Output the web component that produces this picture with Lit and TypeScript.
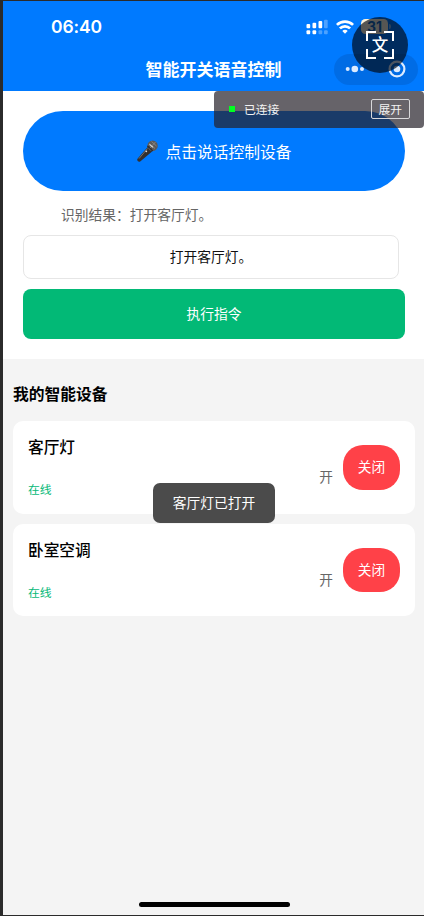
import { LitElement, html, css, svg } from "lit";
import { customElement, property } from "lit/decorators.js";

@customElement("device-card")
class DeviceCard extends LitElement {
  @property() name = "";
  @property() status = "在线";
  @property() power = "开";

  static styles = css`
    :host {
      display: flex;
      box-sizing: border-box;
      height: 92.5px;
      padding: 0 14.5px 0 15px;
      border-radius: 10px;
      background: #fff;
    }
    .info {
      flex: 1;
      display: flex;
      flex-direction: column;
      justify-content: space-between;
      padding: 14px 0 15.5px;
    }
    .name {
      font-size: 15.7px;
      line-height: 24px;
      font-weight: 500;
      color: #000;
    }
    .status {
      font-size: 11.8px;
      line-height: 18px;
      color: #07b978;
    }
    .actions {
      display: flex;
      align-items: center;
      gap: 10px;
    }
    .power {
      font-size: 13.7px;
      line-height: 20px;
      padding-top: 17.5px;
      color: #666;
    }
    .off {
      width: 57px;
      height: 44.5px;
      border: 0;
      padding: 0 0 2px;
      border-radius: 20px;
      background: #ff4148;
      color: #fff;
      font: inherit;
      font-size: 13.7px;
    }
  `;

  render() {
    return html`
      <div class="info">
        <div class="name">${this.name}</div>
        <div class="status">${this.status}</div>
      </div>
      <div class="actions">
        <span class="power">${this.power}</span>
        <button class="off">关闭</button>
      </div>
    `;
  }
}

const bars = [
  { x: 0.5, h: 4.3, top: 1, low: 1 },
  { x: 6.5, h: 5.6, top: 1, low: 1 },
  { x: 12.5, h: 7.3, top: 1, low: 0.3 },
  { x: 18, h: 8.6, top: 0.3, low: 0.3 },
];

@customElement("app-root")
class AppRoot extends LitElement {
  static styles = css`
    :host {
      display: flex;
      flex-direction: column;
      position: relative;
      box-sizing: border-box;
      height: 916px;
      border: solid #2b2b2b;
      border-width: 1px 0 1px 3px;
      background: #f4f4f4;
      overflow: hidden;
      font-family: "Noto Sans CJK SC", sans-serif;
    }
    svg {
      display: block;
    }
    header {
      height: 90px;
      background: #007aff;
      color: #fff;
    }
    .statusbar {
      display: flex;
      height: 51px;
      padding: 0 33px 0 48px;
      justify-content: space-between;
      align-items: center;
    }
    .time {
      font: 600 17.5px/22px Inter, sans-serif;
      letter-spacing: -0.1px;
    }
    .indicators {
      display: flex;
      align-items: center;
      gap: 8px;
    }
    .power-level {
      display: flex;
      align-items: center;
      gap: 1px;
      margin-left: -1px;
    }
    .battery {
      width: 27px;
      height: 15px;
      border-radius: 4.5px;
      background: #fff4dc;
      color: #1668b8;
      font: 700 14px/15px Inter, sans-serif;
      text-align: center;
    }
    .nub {
      width: 2px;
      height: 5px;
      border-radius: 0 2px 2px 0;
      background: #7db7f5;
    }
    .nav {
      display: grid;
      grid-template-columns: 1fr auto 1fr;
      align-items: center;
      height: 34px;
    }
    .title {
      grid-column: 2;
      font-size: 17px;
      line-height: 24px;
      font-weight: 700;
    }
    .capsule {
      justify-self: end;
      margin-right: 6px;
      width: 84px;
      height: 31px;
      border-radius: 16px;
      background: rgba(0, 40, 100, 0.17);
    }
    .panel {
      display: flex;
      flex-direction: column;
      box-sizing: border-box;
      height: 268px;
      padding: 19.5px 19px 0 20px;
      background: #fff;
    }
    button {
      border: 0;
      padding: 0;
      font-family: inherit;
      color: #fff;
    }
    .talk {
      display: flex;
      align-items: center;
      justify-content: center;
      gap: 7px;
      height: 80px;
      border-radius: 40px;
      background: #007aff;
      font-size: 15.75px;
      padding: 2px 2px 0 0;
    }
    .talk svg {
      margin-bottom: 1px;
    }
    .result {
      margin: 13.7px 0 0 38px;
      font-size: 13.75px;
      line-height: 20px;
      color: #666;
    }
    .command {
      box-sizing: border-box;
      width: 376px;
      height: 44px;
      margin-top: 10.8px;
      border: 1px solid #e6e6e6;
      border-radius: 8px;
      font-size: 13.75px;
      line-height: 41px;
      text-align: center;
      color: #111;
    }
    .run {
      height: 50px;
      margin-top: 10px;
      padding-bottom: 2px;
      border-radius: 8px;
      background: #02b976;
      font-size: 13.75px;
    }
    .devices {
      flex: 1;
      display: flex;
      flex-direction: column;
      gap: 10px;
      padding: 23px 9.5px 0 10px;
    }
    h2 {
      margin: 0 0 5px;
      font-size: 15.75px;
      line-height: 24px;
      font-weight: 700;
      color: #000;
    }
    .home {
      align-self: center;
      width: 151px;
      height: 5px;
      margin: 0 0 8px 1px;
      border-radius: 3px;
      background: #000;
    }
    .link {
      position: absolute;
      top: 90px;
      right: 0;
      display: flex;
      align-items: center;
      box-sizing: border-box;
      width: 210px;
      height: 36.5px;
      padding: 0 14px 1px 15px;
      border-radius: 4px;
      background: rgba(37, 33, 41, 0.7);
      color: #f2f2f2;
      font-size: 11.8px;
    }
    .led {
      width: 6px;
      height: 6px;
      margin-right: 9px;
      background: #0f2;
    }
    .label {
      flex: 1;
    }
    .expand {
      box-sizing: border-box;
      width: 39.5px;
      height: 20px;
      border: 1px solid #d8d8da;
      border-radius: 2px;
      line-height: 17px;
      text-align: center;
    }
    .toast {
      position: absolute;
      top: 482px;
      left: 150px;
      width: 122px;
      height: 39.5px;
      border-radius: 7px;
      background: #4b4b4b;
      color: #fff;
      font-size: 13.75px;
      line-height: 38px;
      text-align: center;
    }
    .translate {
      position: absolute;
      top: 16px;
      left: 349px;
      display: grid;
      place-items: center;
      width: 56px;
      height: 56px;
      border-radius: 50%;
      background: rgba(0, 4, 12, 0.66);
      color: #fff;
    }
    .translate > * {
      grid-area: 1 / 1;
    }
    .glyph {
      font-size: 16.5px;
      line-height: 20px;
      margin-bottom: 3px;
      font-weight: 500;
    }
  `;

  render() {
    return html`
      <header>
        <div class="statusbar">
          <span class="time">06:40</span>
          <div class="indicators">
            <svg width="22" height="16" viewBox="0 0 22 16" fill="#fff">
              ${bars.map(
                (b) => svg`
                  <rect x=${b.x} y=${9.3 - b.h} width="3.7" height=${b.h} rx="1" opacity=${b.top} />
                  <rect x=${b.x} y="11.3" width="3.7" height="4" rx="1" opacity=${b.low} />`
              )}
            </svg>
            <svg width="18" height="14" viewBox="0 0 18 14" fill="none" stroke="#fff" stroke-width="2.7">
              <path d="M.9 4.9a11.5 11.5 0 0 1 16.2 0" />
              <path d="M3.9 8.4a7.2 7.2 0 0 1 10.2 0" />
              <path d="M6.3 11a3.7 3.7 0 0 1 5.4 0L9 13.8z" fill="#fff" stroke="none" />
            </svg>
            <div class="power-level">
              <span class="battery">31</span>
              <span class="nub"></span>
            </div>
          </div>
        </div>
        <div class="nav">
          <span class="title">智能开关语音控制</span>
          <div class="capsule">
            <svg width="84" height="31" viewBox="0 0 84 31" fill="#dcebff">
              <circle cx="13.7" cy="15" r="2" />
              <circle cx="20.8" cy="15" r="3.3" />
              <circle cx="28" cy="15" r="2" />
              <circle cx="63" cy="15" r="7.4" fill="none" stroke="#dcebff" stroke-width="2.2" />
              <circle cx="63" cy="15" r="3.3" />
            </svg>
          </div>
        </div>
      </header>
      <section class="panel">
        <button class="talk">
          <svg width="24" height="24" viewBox="0 0 24 24">
            <path d="M12.5 8.2l4.6 4.4L5.2 22.4q-1.3.8-2.5-.4-1-1.2-.2-2.3z" fill="#34302e" />
            <path d="M12.5 9.5L4 19.6" stroke="#77706c" stroke-width="1" />
            <circle cx="17.6" cy="6.7" r="5.2" fill="#5b5a5b" />
            <path d="M12.3 7.3q2.8 1 5.4 4.9" stroke="#302e2e" stroke-width="1.5" fill="none" />
            <path d="M14 4.5l6 5M16.5 2.5l5 4.500M20.5 3l-5.5 6" stroke="#949292" stroke-width=".7" />
            <path d="M14.5 5.3l3.500 3" stroke="#ddd" stroke-width="1.1" />
            <circle cx="11.3" cy="12.3" r=".9" fill="#ddd" />
          </svg>
          <span>点击说话控制设备</span>
        </button>
        <div class="result">识别结果：打开客厅灯。</div>
        <div class="command">打开客厅灯。</div>
        <button class="run">执行指令</button>
      </section>
      <section class="devices">
        <h2>我的智能设备</h2>
        <device-card name="客厅灯"></device-card>
        <device-card name="卧室空调"></device-card>
      </section>
      <div class="home"></div>
      <div class="link">
        <span class="led"></span>
        <span class="label">已连接</span>
        <span class="expand">展开</span>
      </div>
      <div class="toast">客厅灯已打开</div>
      <div class="translate">
        <svg width="28" height="28" viewBox="0 0 28 28" fill="none" stroke="#fff" stroke-width="2">
          <path d="M1 10V1h9M18 1h9v9M27 18v9h-9M10 27H1v-9" />
        </svg>
        <span class="glyph">文</span>
      </div>
    `;
  }
}
